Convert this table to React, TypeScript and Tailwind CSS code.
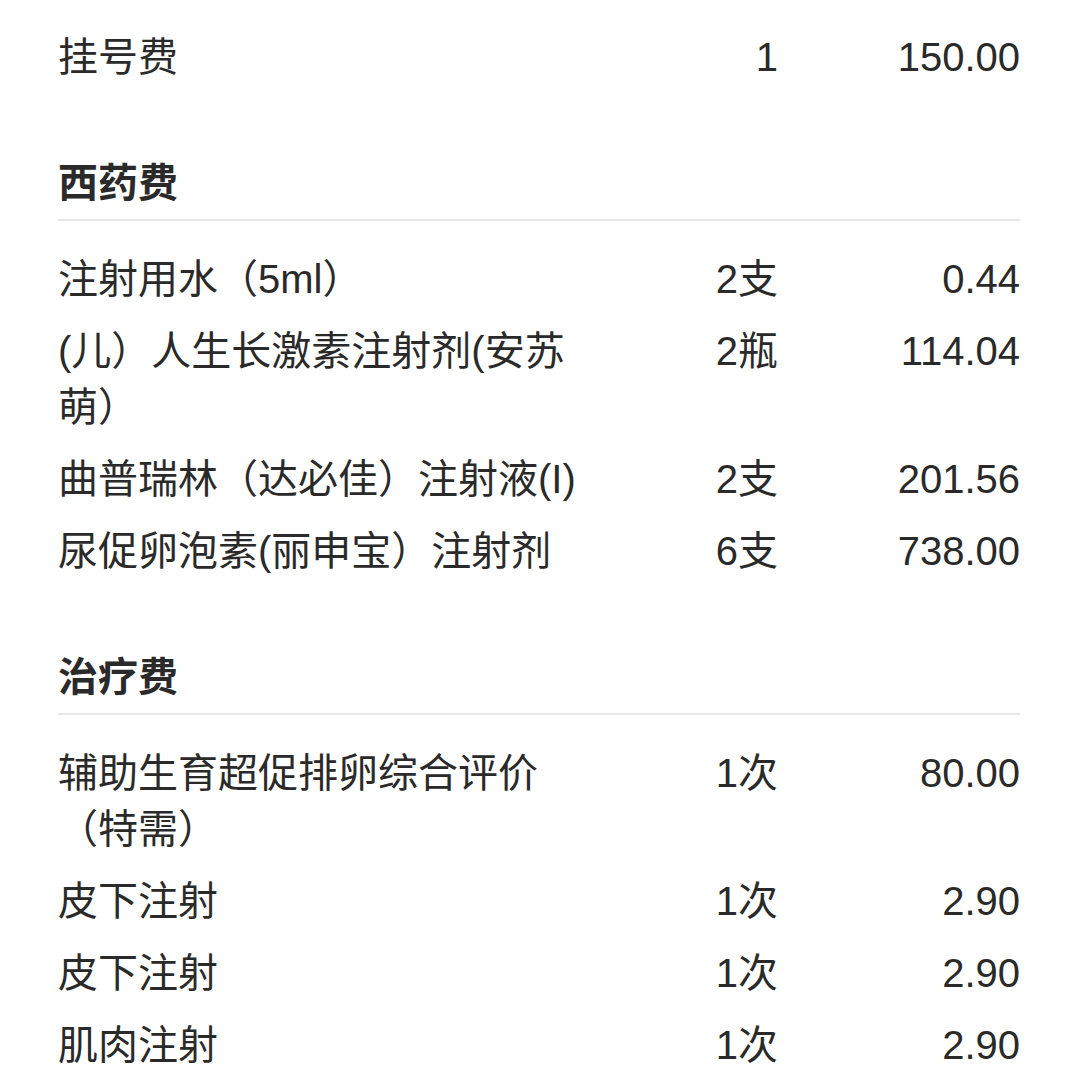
import React from "react";

interface Item {
  name: string;
  qty: string;
  amount: string;
}

interface Group {
  title?: string;
  items: Item[];
}

const groups: Group[] = [
  { items: [{ name: "挂号费", qty: "1", amount: "150.00" }] },
  {
    title: "西药费",
    items: [
      { name: "注射用水（5ml）", qty: "2支", amount: "0.44" },
      { name: "(儿）人生长激素注射剂(安苏萌）", qty: "2瓶", amount: "114.04" },
      { name: "曲普瑞林（达必佳）注射液(I)", qty: "2支", amount: "201.56" },
      { name: "尿促卵泡素(丽申宝）注射剂", qty: "6支", amount: "738.00" },
    ],
  },
  {
    title: "治疗费",
    items: [
      { name: "辅助生育超促排卵综合评价（特需）", qty: "1次", amount: "80.00" },
      { name: "皮下注射", qty: "1次", amount: "2.90" },
      { name: "皮下注射", qty: "1次", amount: "2.90" },
      { name: "肌肉注射", qty: "1次", amount: "2.90" },
    ],
  },
];

const Row = ({ item }: { item: Item }) => (
  <div className="grid grid-cols-[540px_1fr_242px] py-2 leading-[56px]">
    <div>{item.name}</div>
    <div className="text-right">{item.qty}</div>
    <div className="text-right">{item.amount}</div>
  </div>
);

export default function App() {
  return (
    <div
      className="w-[1080px] h-[1080px] overflow-hidden bg-white pl-[58px] pr-[60px] pt-[21px] text-[40px] text-[#2a2a2a]"
      style={{ fontFamily: '"Liberation Sans", "Noto Sans CJK SC", sans-serif' }}
    >
      {groups.map((group, gi) => (
        <div key={gi} className={gi > 0 ? "mt-[62px]" : ""}>
          {group.title && (
            <div className="mb-[22px]">
              <div className="pb-2 font-bold leading-[56px]">{group.title}</div>
              <div className="h-[2px] bg-[#e6e6e6]" />
            </div>
          )}
          {group.items.map((item, i) => (
            <Row key={i} item={item} />
          ))}
        </div>
      ))}
    </div>
  );
}
